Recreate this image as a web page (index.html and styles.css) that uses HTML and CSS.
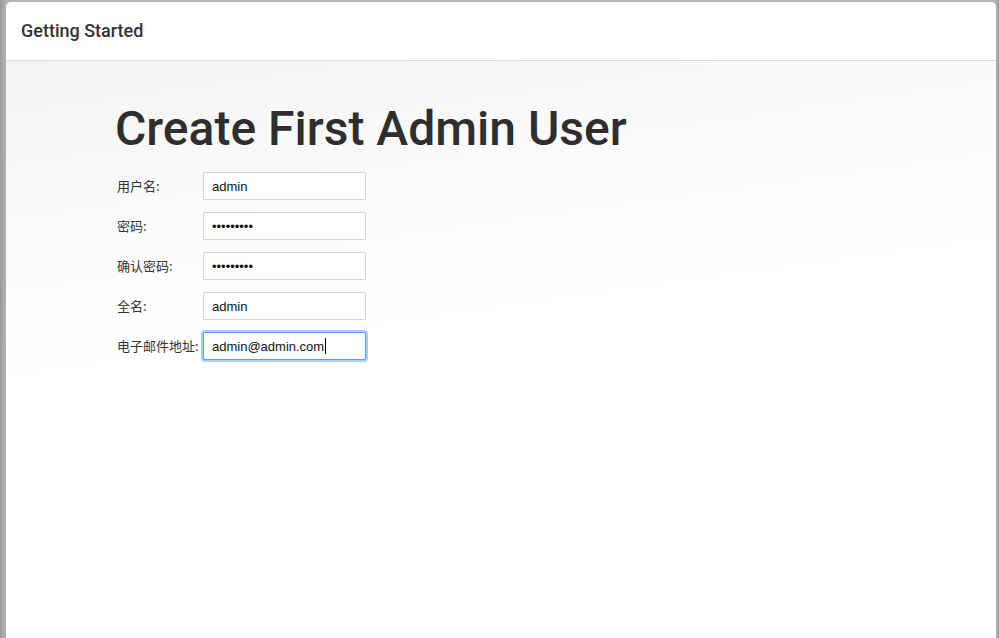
FILE: index.html
```html
<!DOCTYPE html>
<html>
<head>
<meta charset="utf-8">
<link rel="stylesheet" href="styles.css">
</head>
<body>
<div class="window">
  <div class="header"><span class="header-title">Getting Started</span></div>
  <div class="content">
    <h1 class="title">Create First Admin User</h1>
    <form class="form">
      <div class="row"><label class="label">用户名:</label><input class="input" type="text" value="admin"></div>
      <div class="row"><label class="label">密码:</label><input class="input" type="password" value="adminpass"></div>
      <div class="row"><label class="label">确认密码:</label><input class="input" type="password" value="adminpass"></div>
      <div class="row"><label class="label">全名:</label><input class="input" type="text" value="admin"></div>
      <div class="row"><label class="label">电子邮件地址:</label><div class="input focused">admin@admin.com<span class="caret"></span></div></div>
    </form>
  </div>
</div>
</body>
</html>
```

FILE: styles.css
```css
html, body {
  margin: 0;
  height: 100%;
}
body {
  background: linear-gradient(90deg, #9a9a9a 0, #b4b4b4 6px, #b4b4b4 calc(100% - 3px), #9a9a9a 100%);
  padding: 2px 3px 0 6px;
  box-sizing: border-box;
  display: flex;
  font-family: Roboto, "Noto Sans CJK SC", sans-serif;
  overflow: hidden;
}
.window {
  flex: 1;
  display: flex;
  flex-direction: column;
  background: #fff;
  border-radius: 5px 5px 0 0;
  overflow: hidden;
}
.header {
  height: 58px;
  border-bottom: 1px solid #dcdcdc;
  display: flex;
  align-items: center;
  padding-left: 15px;
  flex-shrink: 0;
}
.header-title {
  font-size: 18px;
  color: #333;
  font-weight: 500;
  position: relative;
  top: -1px;
}
.content {
  flex: 1;
  background: linear-gradient(172deg, #f3f3f3 0, #fbfbfb 25%, #fff 45%);
  padding: 40px 0 0 109px;
}
.title {
  margin: 0 0 15px;
  font-size: 48px;
  font-weight: 500;
  color: #2e2e2e;
  line-height: 56px;
  letter-spacing: 0;
}
.form {
  display: flex;
  flex-direction: column;
  gap: 12px;
}
.row {
  display: flex;
  align-items: center;
  height: 28px;
}
.label {
  width: 86px;
  padding-left: 2px;
  padding-bottom: 2px;
  font-size: 13px;
  color: #333;
  font-family: "Noto Sans CJK SC", sans-serif;
}
.input {
  box-sizing: border-box;
  width: 163px;
  height: 28px;
  border: 1px solid #d4d4d4;
  border-radius: 1px;
  background: #fff;
  padding: 0 8px;
  font-family: "Liberation Sans", Arial, sans-serif;
  font-size: 13px;
  color: #111;
  outline: none;
  margin: 0;
}
.focused {
  display: flex;
  align-items: center;
  border: 1px solid #5b9bf0;
  box-shadow: 0 0 0 2px #a9cdf9;
  border-radius: 2px;
}
.caret {
  display: inline-block;
  width: 1px;
  height: 16px;
  background: #000;
  margin-left: 1px;
}
```
